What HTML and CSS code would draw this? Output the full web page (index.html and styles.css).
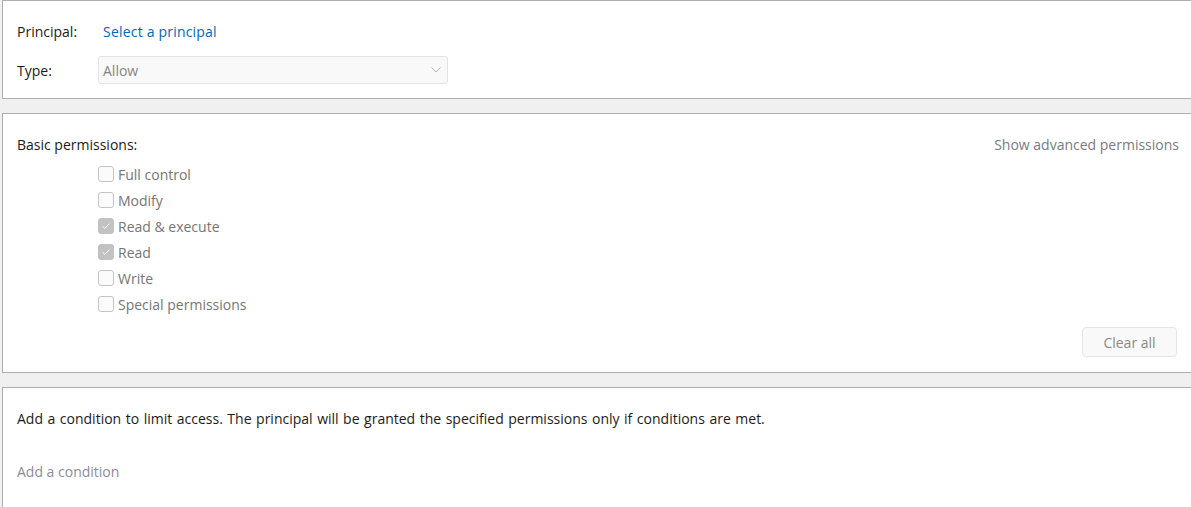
FILE: index.html
```html
<!DOCTYPE html>
<html>
<head>
<meta charset="utf-8">
<link rel="stylesheet" href="styles.css">
</head>
<body>
<div class="page">
  <section class="panel panel-principal">
    <div class="field-row row-principal">
      <span class="field-label">Principal:</span>
      <a class="link">Select a principal</a>
    </div>
    <div class="field-row row-type">
      <span class="field-label">Type:</span>
      <div class="select">
        <span class="select-value">Allow</span>
        <svg class="chev" width="10" height="6" viewBox="0 0 10 6"><path d="M0.5 0.5 L5 5 L9.5 0.5" fill="none" stroke="#b4b4b4" stroke-width="1"/></svg>
      </div>
    </div>
  </section>

  <section class="panel panel-perms">
    <div class="perm-head">
      <span class="heading">Basic permissions:</span>
      <span class="advanced">Show advanced permissions</span>
    </div>
    <ul class="perm-list">
      <li class="perm"><span class="box"></span><span class="perm-label">Full control</span></li>
      <li class="perm"><span class="box"></span><span class="perm-label">Modify</span></li>
      <li class="perm"><span class="box checked"><svg width="10" height="8" viewBox="0 0 10 8"><path d="M1.5 4.2 L3.8 6.4 L8.5 1.6" fill="none" stroke="#fff" stroke-width="1"/></svg></span><span class="perm-label">Read &amp; execute</span></li>
      <li class="perm"><span class="box checked"><svg width="10" height="8" viewBox="0 0 10 8"><path d="M1.5 4.2 L3.8 6.4 L8.5 1.6" fill="none" stroke="#fff" stroke-width="1"/></svg></span><span class="perm-label">Read</span></li>
      <li class="perm"><span class="box"></span><span class="perm-label">Write</span></li>
      <li class="perm"><span class="box"></span><span class="perm-label">Special permissions</span></li>
    </ul>
    <div class="actions">
      <button class="btn">Clear all</button>
    </div>
  </section>

  <section class="panel panel-cond">
    <p class="cond-text">Add a condition to limit access. The principal will be granted the specified permissions only if conditions are met.</p>
    <span class="add-cond">Add a condition</span>
  </section>
</div>
</body>
</html>
```

FILE: styles.css
```css
html, body {
  margin: 0;
  padding: 0;
  background: #f0f0f0;
  overflow: hidden;
  height: 100%;
}
body {
  font-family: "Open Sans", "Noto Sans", sans-serif;
  font-size: 14px;
  color: #1b1b1b;
}
.page {
  box-sizing: border-box;
  padding-left: 2px;
  width: 100%;
  min-height: calc(100% + 20px);
  display: flex;
  flex-direction: column;
  gap: 14px;
}
.panel {
  background: #fff;
  border: 1px solid #adadad;
  border-right: none;
}
.panel-principal {
  box-sizing: border-box;
  height: 99px;
  padding: 19px 0 0 14px;
}
.field-row {
  display: flex;
  align-items: center;
}
.row-principal { height: 22px; }
.row-type { margin-top: 14px; }
.field-label {
  width: 81px;
}
.link {
  color: #0067c0;
  margin-left: 5px;
  letter-spacing: 0.2px;
}
.select {
  box-sizing: border-box;
  width: 350px;
  height: 28px;
  border: 1px solid #e3e3e3;
  border-radius: 3px;
  background: #f9f9f9;
  display: flex;
  align-items: center;
  justify-content: space-between;
  padding: 0 6px 0 4px;
  color: #858585;
}

.panel-perms {
  box-sizing: border-box;
  height: 260px;
  padding: 21px 12px 0 14px;
}
.perm-head {
  display: flex;
  justify-content: space-between;
  align-items: center;
}
.advanced { color: #7a7a85; }
.perm-list {
  list-style: none;
  margin: 7px 0 0 81px;
  padding: 0;
}
.perm {
  display: flex;
  align-items: center;
  height: 26px;
  color: #767676;
}
.box {
  box-sizing: border-box;
  width: 16px;
  height: 16px;
  border: 1px solid #c4c4c4;
  border-radius: 3px;
  background: #fbfbfb;
  margin-right: 4px;
  display: flex;
  align-items: center;
  justify-content: center;
}
.box.checked {
  background: #c2c2c2;
  border-color: #c2c2c2;
}
.actions {
  display: flex;
  justify-content: flex-end;
  margin-top: 10px;
  margin-right: 2px;
}
.btn {
  font: inherit;
  width: 95px;
  height: 30px;
  border: 1px solid #e5e5e5;
  border-radius: 4px;
  background: #f9f9f9;
  color: #8a8a8a;
}

.panel-cond {
  flex: 1;
  padding: 21px 0 0 14px;
}
.cond-text {
  margin: 0;
  word-spacing: 0.9px;
}
.add-cond {
  display: block;
  margin-top: 34px;
  color: #8c8c9a;
}
```
